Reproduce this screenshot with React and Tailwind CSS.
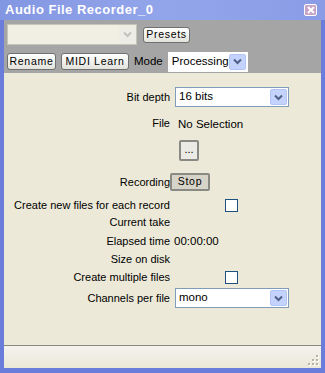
import React from 'react';

const Chevron = ({ color = '#4d6185' }) => (
  <svg width="9" height="7" viewBox="0 0 9 7">
    <path d="M1 1.5 L4.5 5 L8 1.5" fill="none" stroke={color} strokeWidth="2" />
  </svg>
);

const Select = ({ value, className }) => (
  <div className={`flex items-center bg-white border border-[#7f9db9] h-[20px] ${className}`}>
    <span className="flex-1 pl-[3px] text-[11.5px] text-black leading-none whitespace-nowrap">{value}</span>
    <div className="w-[17px] h-[16px] mr-[1px] rounded-[2px] bg-[#c3d3fd] border border-[#b1c4f4] flex items-center justify-center">
      <Chevron />
    </div>
  </div>
);

const Button = ({ children, className = '' }) => (
  <div className={`flex items-center justify-center rounded-[3px] border border-[#707070] bg-gradient-to-b from-white to-[#e3e3dc] text-[10.5px] tracking-[0.7px] text-black whitespace-nowrap ${className}`}>
    {children}
  </div>
);

const Checkbox = () => <div className="w-[13px] h-[13px] border border-[#1c5180] bg-white" />;

const Row = ({ label, h, children, mt = 0 }) => (
  <div className="flex items-center" style={{ height: h, marginTop: mt }}>
    <div className="w-[166px] text-right text-[11px] text-black leading-none whitespace-nowrap">{label}</div>
    <div className="flex-1 flex items-center pl-[5px]">{children}</div>
  </div>
);

export default function App() {
  return (
    <div className="w-[325px] h-[373px] flex flex-col bg-[#6a7ddb] px-[4px] pb-[5px]" style={{ fontFamily: '"Liberation Sans", Arial, sans-serif' }}>
      <div className="h-[20px] -mx-[4px] px-[5px] flex items-center bg-gradient-to-r from-[#8396e2] via-[#93a5ea] to-[#8a9ce6]">
        <span className="flex-1 text-[13px] font-bold text-white tracking-[0.5px]">Audio File Recorder_0</span>
        <div className="w-[13px] h-[12px] mr-[3px] border border-white rounded-[2px] bg-[#c8a3c8] flex items-center justify-center">
          <svg width="8" height="8" viewBox="0 0 8 8">
            <path d="M1 1 L7 7 M7 1 L1 7" stroke="white" strokeWidth="2" />
          </svg>
        </div>
      </div>
      <div className="bg-[#a5a5a5] h-[53px] flex flex-col px-[3px]">
        <div className="flex items-center mt-[4px] h-[21px]">
          <div className="w-[130px] h-[21px] bg-[#f1efe3] border border-[#c7c5b8] flex justify-end items-center">
            <div className="w-[17px] h-[19px] bg-[#eeede5] flex items-center justify-center">
              <Chevron color="#c1c1bd" />
            </div>
          </div>
          <Button className="ml-[6px] w-[47px] h-[16px]">Presets</Button>
        </div>
        <div className="flex items-center mt-[6px] h-[21px]">
          <Button className="w-[49px] h-[17px]">Rename</Button>
          <Button className="ml-[5px] w-[68px] h-[17px]">MIDI Learn</Button>
          <span className="ml-[5px] text-[11.5px] text-black">Mode</span>
          <Select value="Processing" className="ml-[5px] w-[80px] !border-white" />
        </div>
      </div>
      <div className="flex-1 bg-[#ece9d8] flex flex-col pt-[14px]">
        <Row label="Bit depth" h={20}>
          <Select value="16 bits" className="w-[114px]" />
        </Row>
        <Row label="File" h={16} mt={8}>
          <span className="text-[11.5px] text-black leading-none mt-[3px] ml-[3px]">No Selection</span>
        </Row>
        <Row label="" h={21} mt={9}>
          <div className="ml-[4px] w-[20px] h-[21px] border-2 border-[#8a8a84] rounded-[2px] bg-[#ebeae4] flex items-center justify-center text-[11px] leading-none pb-[3px]">...</div>
        </Row>
        <Row label="Recording" h={18} mt={12}>
          <div className="-ml-[5px] w-[40px] h-[18px] border-2 border-[#8a8a84] rounded-[2px] bg-[#d6d3c8] flex items-center justify-center text-[10.5px] tracking-[0.7px]">Stop</div>
        </Row>
        <Row label="Create new files for each record" h={15} mt={7}>
          <div className="ml-[50px]"><Checkbox /></div>
        </Row>
        <Row label="Current take" h={15} mt={2} />
        <Row label="Elapsed time" h={15} mt={4}>
          <span className="-ml-[1px] text-[11.5px] text-black leading-none">00:00:00</span>
        </Row>
        <Row label="Size on disk" h={15} mt={3} />
        <Row label="Create multiple files" h={14} mt={3}>
          <div className="ml-[50px]"><Checkbox /></div>
        </Row>
        <Row label="Channels per file" h={20} mt={4}>
          <Select value="mono" className="w-[114px]" />
        </Row>
        <div className="flex-1" />
        <div className="h-[1px] bg-[#8c8a7e]" />
        <div className="h-[22px] bg-gradient-to-b from-[#f4f3ee] to-[#ebe8d8] flex items-end justify-end pr-[2px] pb-[2px]">
          <svg width="11" height="11" viewBox="0 0 11 11">
            {[[9, 1], [9, 5], [5, 5], [9, 9], [5, 9], [1, 9]].map(([x, y], i) => (
              <g key={i}>
                <rect x={x} y={y} width="2" height="2" fill="#fff" />
                <rect x={x - 1} y={y - 1} width="2" height="2" fill="#b7b4a6" />
              </g>
            ))}
          </svg>
        </div>
      </div>
    </div>
  );
}
